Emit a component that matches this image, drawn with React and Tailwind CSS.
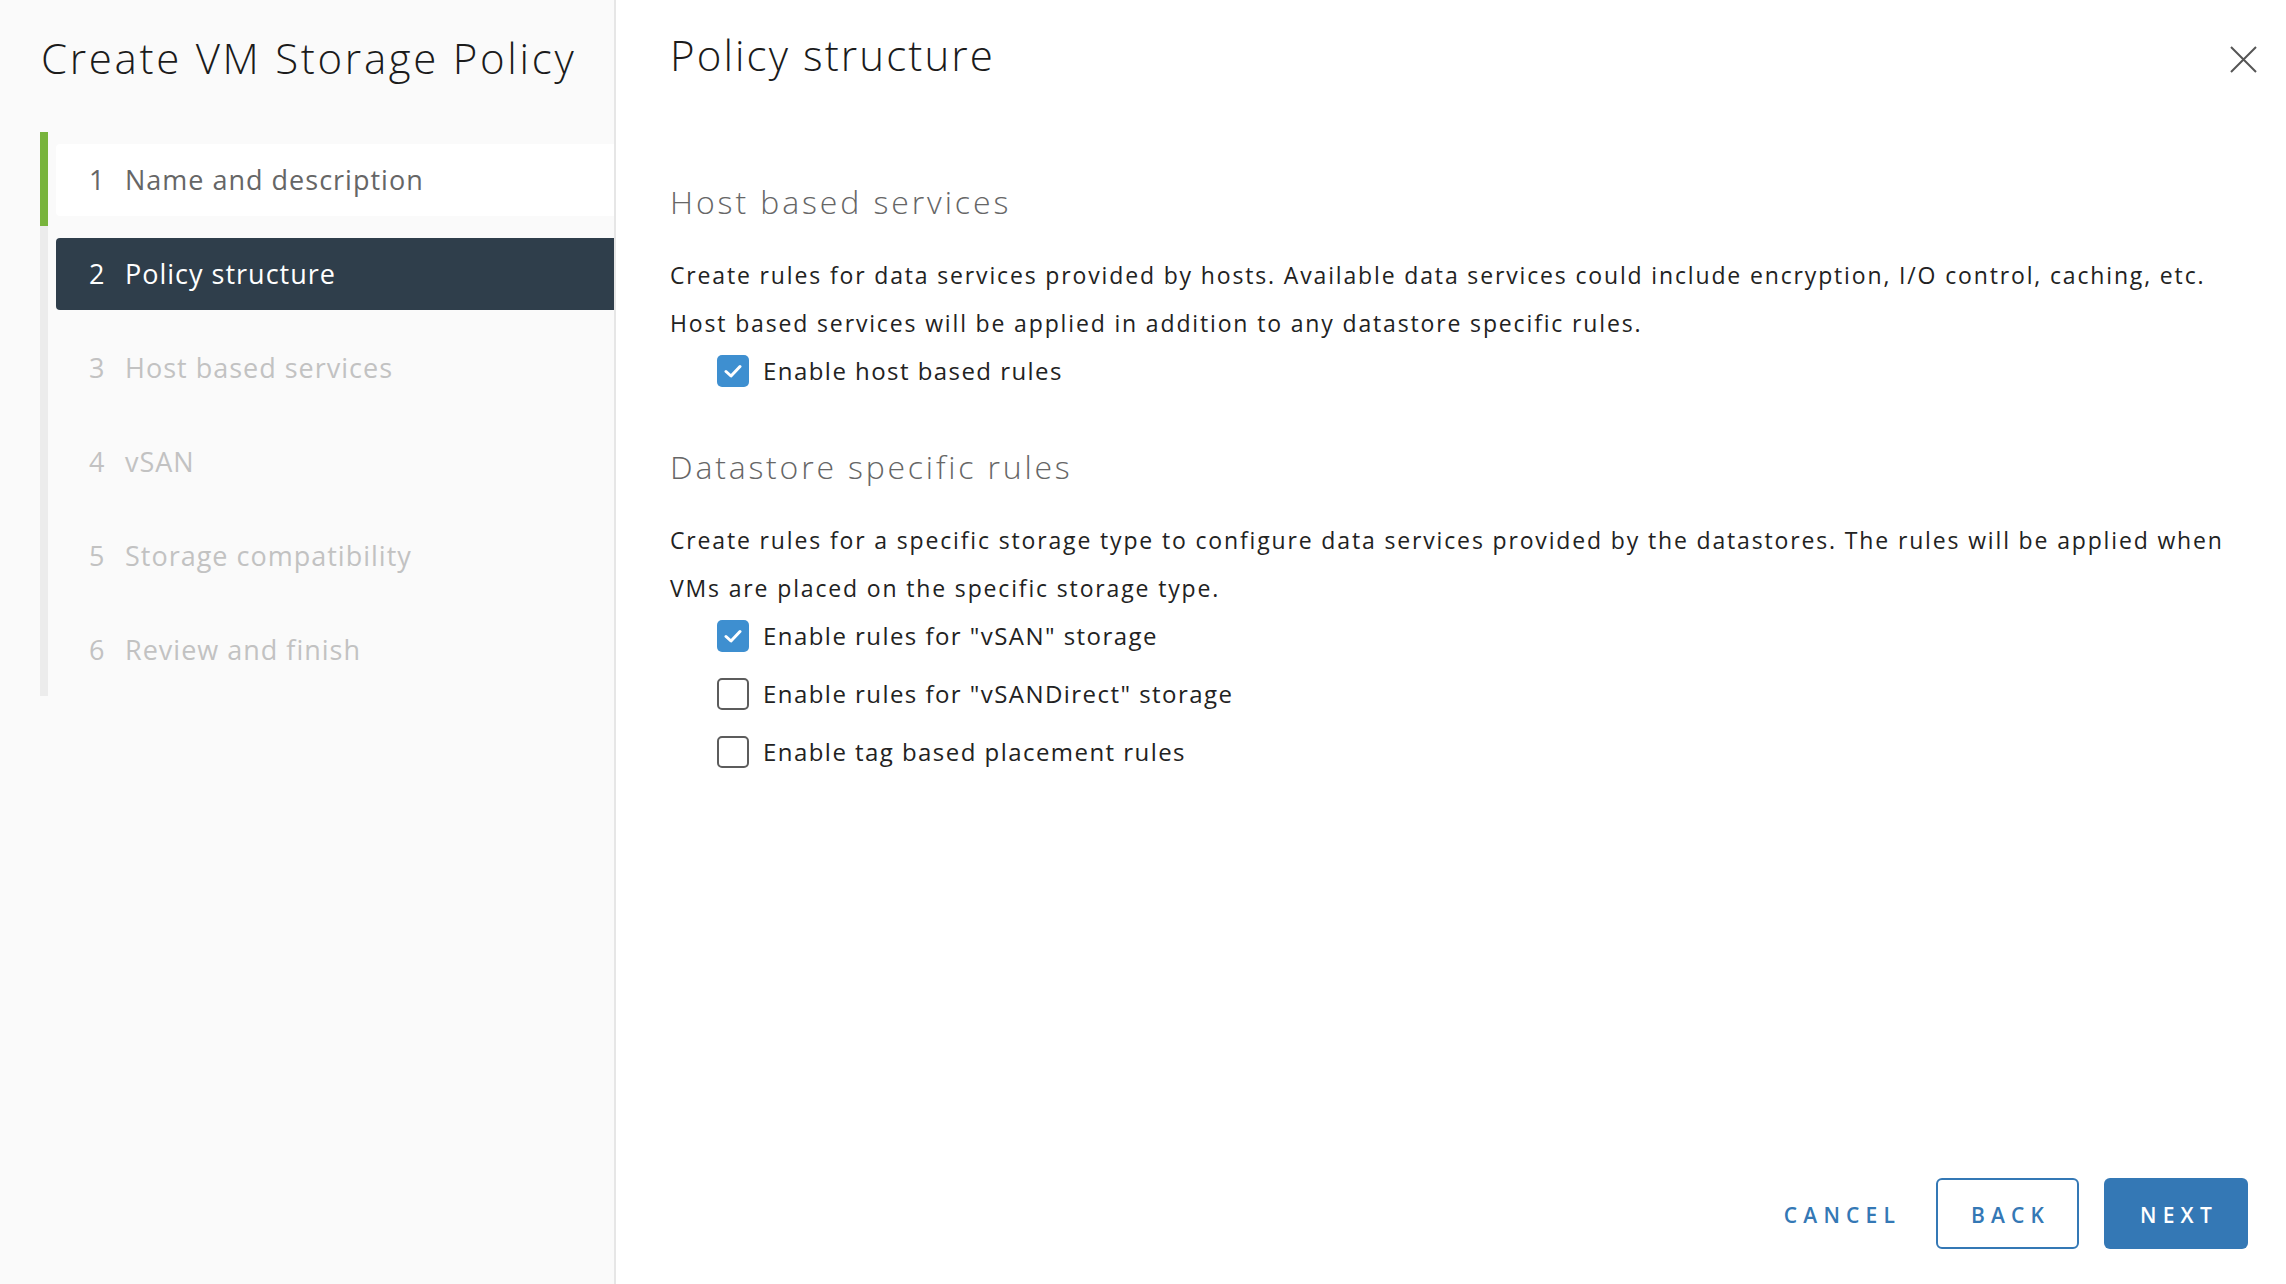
import React, { useState } from "react";

const font = { fontFamily: '"Open Sans", "Noto Sans", sans-serif' };

const steps = [
  { n: 1, label: "Name and description", state: "done" },
  { n: 2, label: "Policy structure", state: "active" },
  { n: 3, label: "Host based services", state: "todo" },
  { n: 4, label: "vSAN", state: "todo" },
  { n: 5, label: "Storage compatibility", state: "todo" },
  { n: 6, label: "Review and finish", state: "todo" },
];

const StepItem = ({ step }) => {
  const box =
    step.state === "active"
      ? "bg-[#2f3e4b] text-white"
      : step.state === "done"
      ? "bg-white text-[#666666]"
      : "text-[#c2c2c2]";
  return (
    <div
      className={`border-l-8 pl-2 pt-3 pb-[10px] ${
        step.state === "done" ? "border-[#78b43c]" : "border-[#ececec]"
      }`}
    >
      <div className={`h-[72px] rounded-l-[4px] flex items-center pl-[33px] text-[27px] tracking-[1px] ${box}`}>
        <span className="w-[36px]">{step.n}</span>
        <span>{step.label}</span>
      </div>
    </div>
  );
};

const Checkbox = ({ checked, onChange, label }) => (
  <label className="flex items-center h-[48px] ml-[47px] cursor-pointer select-none">
    <span
      onClick={onChange}
      className={`w-[32px] h-[32px] rounded-[5px] flex items-center justify-center ${
        checked ? "bg-[#3e8fd0]" : "border-2 border-[#5c5c5c] bg-white"
      }`}
    >
      {checked && (
        <svg width="18" height="14" viewBox="0 0 18 14">
          <path d="M2 7.5 L7 12 L16 2.5" fill="none" stroke="white" strokeWidth="3" strokeLinecap="round" strokeLinejoin="round" />
        </svg>
      )}
    </span>
    <span className="ml-[14px] text-[24px] tracking-[1.45px] text-[#222222]">{label}</span>
  </label>
);

const App = () => {
  const [hostRules, setHostRules] = useState(true);
  const [vsan, setVsan] = useState(true);
  const [vsanDirect, setVsanDirect] = useState(false);
  const [tagRules, setTagRules] = useState(false);

  return (
    <div className="flex w-[2286px] h-[1284px] bg-white" style={font}>
      {/* wizard sidebar */}
      <div className="w-[616px] shrink-0 bg-[#fafafa] border-r-2 border-[#e6e6e6]">
        <h1 className="pl-[41px] pt-[28px] text-[42px] leading-[60px] font-light tracking-[2.7px] text-[#1b1b1b] whitespace-nowrap">
          Create VM Storage Policy
        </h1>
        <div className="ml-[40px] mt-[44px]">
          {steps.map((s) => (
            <StepItem key={s.n} step={s} />
          ))}
        </div>
      </div>

      {/* content */}
      <div className="flex-1 flex flex-col pl-[54px] pr-[29px] pb-[35px]">
        <div className="flex justify-between items-start">
          <h2 className="pt-[25px] text-[42px] leading-[60px] font-light tracking-[2.1px] text-[#1b1b1b]">
            Policy structure
          </h2>
          <button className="mt-[46px] w-[27px] h-[27px]">
            <svg width="27" height="27" viewBox="0 0 27 27">
              <path d="M1 1 L26 26 M26 1 L1 26" stroke="#555555" strokeWidth="2" />
            </svg>
          </button>
        </div>

        <h3 className="mt-[93px] text-[32px] leading-[48px] font-light tracking-[2.9px] text-[#666666]">
          Host based services
        </h3>
        <p className="mt-[25px] text-[23px] leading-[48px] tracking-[1.85px] text-[#222222] whitespace-nowrap">
          Create rules for data services provided by hosts. Available data services could include encryption, I/O control, caching, etc.
          <br />
          Host based services will be applied in addition to any datastore specific rules.
        </p>
        <Checkbox checked={hostRules} onChange={() => setHostRules(!hostRules)} label="Enable host based rules" />

        <h3 className="mt-[48px] text-[32px] leading-[48px] font-light tracking-[2.8px] text-[#666666]">
          Datastore specific rules
        </h3>
        <p className="mt-[25px] text-[23px] leading-[48px] tracking-[1.85px] text-[#222222] whitespace-nowrap">
          Create rules for a specific storage type to configure data services provided by the datastores. The rules will be applied when
          <br />
          VMs are placed on the specific storage type.
        </p>
        <div className="flex flex-col gap-[10px]">
          <Checkbox checked={vsan} onChange={() => setVsan(!vsan)} label={'Enable rules for "vSAN" storage'} />
          <Checkbox checked={vsanDirect} onChange={() => setVsanDirect(!vsanDirect)} label={'Enable rules for "vSANDirect" storage'} />
          <Checkbox checked={tagRules} onChange={() => setTagRules(!tagRules)} label="Enable tag based placement rules" />
        </div>

        <div className="mt-auto flex justify-end gap-[25px] pr-[9px]">
          <button className="w-[143px] h-[71px] pl-[6px] pt-[4px] text-[21px] font-semibold tracking-[6.2px] text-[#3478b5]">
            CANCEL
          </button>
          <button className="w-[143px] h-[71px] pl-[6px] pt-[4px] rounded-[6px] border-2 border-[#3478b5] text-[21px] font-semibold tracking-[6.2px] text-[#3478b5]">
            BACK
          </button>
          <button className="w-[144px] h-[71px] pl-[6px] pt-[4px] rounded-[6px] bg-[#3478b5] text-[21px] font-semibold tracking-[6.2px] text-white">
            NEXT
          </button>
        </div>
      </div>
    </div>
  );
};

export default App;
